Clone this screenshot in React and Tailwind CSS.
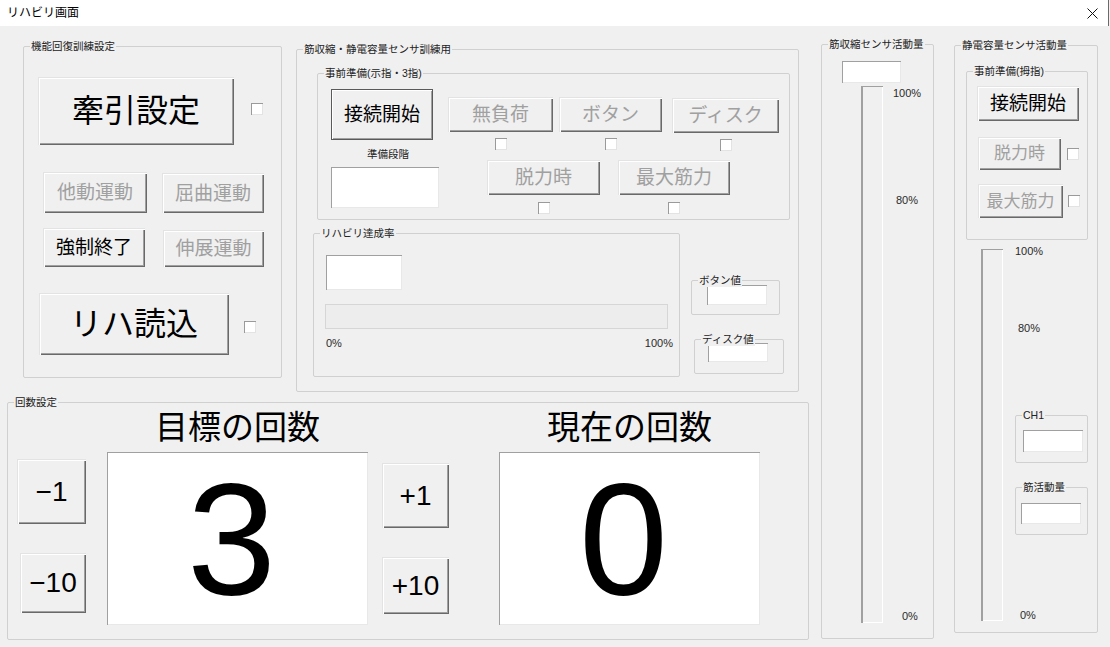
import React from 'react';
import clsx from 'clsx';

const Btn = ({ className = '', disabled, primary, children }) => (
  <button
    type="button"
    className={clsx(
      'flex shrink-0 items-center justify-center whitespace-nowrap bg-[#f0f0f0] leading-none',
      primary
        ? 'border border-[#5a5a5a] shadow-[inset_1px_1px_0_#ffffff,inset_-1px_-1px_0_#a0a0a0]'
        : 'shadow-[inset_1px_1px_0_#e3e3e3,inset_2px_2px_0_#ffffff,inset_-1px_-1px_0_#696969,inset_-2px_-2px_0_#a0a0a0]',
      disabled ? 'text-[#a0a0a0]' : 'text-black',
      className
    )}
  >
    {children}
  </button>
);

const Check = ({ className = '' }) => (
  <div className={clsx('h-[12px] w-[12px] shrink-0 bg-white shadow-[inset_1px_1px_0_#9a9a9a,inset_-1px_-1px_0_#e3e3e3]', className)} />
);

const TextBox = ({ className = '', children }) => (
  <div className={clsx('shrink-0 bg-white shadow-[inset_1px_1px_0_#a0a0a0,inset_-1px_-1px_0_#e8e8e8]', className)}>
    {children}
  </div>
);

const Group = ({ label, className = '', children }) => (
  <div className={clsx('relative shrink-0 rounded-[2px] border border-[#d0d0d0]', className)}>
    <span className="absolute -top-[8px] left-[6px] z-10 whitespace-nowrap bg-[#f0f0f0] px-[1px] text-[10.5px] leading-[14px] text-[#222]">
      {label}
    </span>
    {children}
  </div>
);

const VBar = ({ className = '' }) => (
  <div className={clsx('w-[22px] shrink-0 shadow-[inset_2px_0_0_#a0a0a0,inset_0_1px_0_#a0a0a0,inset_-1px_-1px_0_#ffffff]', className)} />
);

const Pct = ({ className = '', children }) => (
  <span className={clsx('text-[11px] leading-[14px] text-[#2a2a2a]', className)}>{children}</span>
);

// checkbox under a button, centered
const Stack = ({ w, h, label, className = '', checkGap = 'mt-[6px]' }) => (
  <div className={clsx('flex shrink-0 flex-col items-center', className)}>
    <Btn disabled className={clsx(w, h, 'text-[19px]')}>{label}</Btn>
    <Check className={checkGap} />
  </div>
);

export default function App() {
  return (
    <div className="h-[647px] w-[1110px] overflow-hidden bg-[#f0f0f0] font-['Liberation_Sans','Noto_Sans_CJK_JP',sans-serif] text-[#111]">
      {/* Title bar */}
      <div className="flex h-[26px] w-[1109px] items-center justify-between border-r border-[#6a6a6a] bg-white pl-[7px] pr-[10px]">
        <span className="text-[12px] text-black">リハビリ画面</span>
        <svg width="11" height="11" viewBox="0 0 11 11" className="mt-[1px]">
          <path d="M0.5 0.5 L10.5 10.5 M10.5 0.5 L0.5 10.5" stroke="#111" strokeWidth="1" />
        </svg>
      </div>

      <div className="flex items-start">
        {/* Left region */}
        <div className="ml-[7px] w-[802px] shrink-0">
          <div className="flex items-start">
            {/* 機能回復訓練設定 */}
            <Group label="機能回復訓練設定" className="ml-[16px] mt-[20px] flex h-[332px] w-[259px] flex-col">
              <div className="ml-[14px] mt-[30px] flex items-center">
                <Btn className="h-[68px] w-[196px] text-[32px]">牽引設定</Btn>
                <Check className="ml-[17px] -mt-[4px]" />
              </div>
              <div className="ml-[19px] mt-[27px] flex items-start gap-[15px]">
                <Btn disabled className="h-[41px] w-[104px] text-[19px]">他動運動</Btn>
                <Btn disabled className="mt-[1px] h-[40px] w-[102px] text-[19px]">屈曲運動</Btn>
              </div>
              <div className="ml-[19px] mt-[15px] flex items-start gap-[18px]">
                <Btn className="h-[39px] w-[102px] text-[19px]">強制終了</Btn>
                <Btn disabled className="mt-[2px] h-[37px] w-[101px] text-[19px]">伸展運動</Btn>
              </div>
              <div className="ml-[15px] mt-[26px] flex items-center">
                <Btn className="h-[62px] w-[190px] text-[32px]">リハ読込</Btn>
                <Check className="ml-[15px] mt-[6px]" />
              </div>
            </Group>

            {/* 筋収縮・静電容量センサ訓練用 */}
            <Group label="筋収縮・静電容量センサ訓練用" className="ml-[14px] mt-[23px] flex h-[343px] w-[503px] flex-col">
              <Group label="事前準備(示指・3指)" className="ml-[20px] mt-[23px] flex h-[147px] w-[473px] items-start">
                <div className="ml-[13px] mt-[15px] flex w-[108px] flex-col items-start">
                  <Btn primary className="h-[51px] w-[102px] text-[19px]">接続開始</Btn>
                  <span className="ml-[36px] mt-[7px] text-[10.5px] leading-[14px] text-[#222]">準備段階</span>
                  <TextBox className="mt-[6px] h-[41px] w-[108px]" />
                </div>
                <div className="ml-[9px] mt-[23px] flex flex-col">
                  <div className="flex items-start">
                    <Stack w="w-[105px]" h="h-[35px]" label="無負荷" />
                    <Stack w="w-[103px]" h="h-[35px]" label="ボタン" className="ml-[6px]" />
                    <Stack w="w-[107px]" h="h-[35px]" label="ディスク" className="ml-[10px] mt-[1px]" />
                  </div>
                  <div className="ml-[39px] mt-[9px] flex items-start">
                    <Stack w="w-[113px]" h="h-[35px]" label="脱力時" checkGap="mt-[7px]" />
                    <Stack w="w-[112px]" h="h-[35px]" label="最大筋力" className="ml-[18px]" checkGap="mt-[7px]" />
                  </div>
                </div>
              </Group>

              <div className="flex items-start">
                <Group label="リハビリ達成率" className="ml-[16px] mt-[13px] flex h-[144px] w-[367px] flex-col">
                  <TextBox className="ml-[12px] mt-[21px] h-[35px] w-[76px]" />
                  <div className="ml-[11px] mt-[14px] h-[25px] w-[343px] border border-[#d6d6d6] bg-[#ededed]" />
                  <div className="ml-[12px] mt-[7px] flex w-[347px] justify-between">
                    <Pct>0%</Pct>
                    <Pct>100%</Pct>
                  </div>
                </Group>
                <div className="ml-[11px] flex flex-col">
                  <Group label="ボタン値" className="mt-[60px] h-[35px] w-[89px]">
                    <TextBox className="ml-[15px] mt-[4px] h-[20px] w-[60px]" />
                  </Group>
                  <Group label="ディスク値" className="ml-[3px] mt-[24px] h-[35px] w-[90px]">
                    <TextBox className="ml-[13px] mt-[3px] h-[19px] w-[60px]" />
                  </Group>
                </div>
              </div>
            </Group>
          </div>

          {/* 回数設定 */}
          <Group label="回数設定" className="mt-[10px] flex h-[238px] w-[802px] items-start">
            <div className="ml-[9px] mt-[56px] flex w-[69px] flex-col">
              <Btn className="h-[65px] w-[69px] text-[28px]">−1</Btn>
              <Btn className="ml-[3px] mt-[29px] h-[60px] w-[66px] text-[28px]">−10</Btn>
            </div>
            <div className="ml-[21px] flex w-[261px] flex-col">
              <div className="mt-[7px] h-[36px] whitespace-nowrap text-center text-[33px] leading-[36px] text-black">目標の回数</div>
              <TextBox className="mt-[6px] flex h-[173px] w-[261px] items-center justify-center pr-[12px]">
                <span className="text-[160px] leading-none text-black">3</span>
              </TextBox>
            </div>
            <div className="ml-[14px] mt-[60px] flex w-[67px] flex-col">
              <Btn className="h-[65px] w-[67px] text-[28px]">+1</Btn>
              <Btn className="mt-[29px] h-[57px] w-[67px] text-[28px]">+10</Btn>
            </div>
            <div className="ml-[50px] flex w-[261px] flex-col">
              <div className="mt-[7px] h-[36px] whitespace-nowrap text-center text-[33px] leading-[36px] text-black">現在の回数</div>
              <TextBox className="mt-[6px] flex h-[173px] w-[261px] items-center justify-center pr-[12px]">
                <span className="text-[160px] leading-none text-black">0</span>
              </TextBox>
            </div>
          </Group>
        </div>

        {/* 筋収縮センサ活動量 */}
        <Group label="筋収縮センサ活動量" className="ml-[12px] mt-[18px] flex h-[595px] w-[113px] flex-col">
          <TextBox className="ml-[20px] mt-[16px] h-[22px] w-[59px]" />
          <div className="mt-[3px] flex items-start">
            <VBar className="ml-[39px] h-[537px]" />
            <div className="ml-[10px] flex flex-col items-start">
              <Pct>100%</Pct>
              <Pct className="ml-[3px] mt-[93px]">80%</Pct>
              <Pct className="ml-[9px] mt-[402px]">0%</Pct>
            </div>
          </div>
        </Group>

        {/* 静電容量センサ活動量 */}
        <Group label="静電容量センサ活動量" className="ml-[20px] mt-[19px] flex h-[588px] w-[144px] flex-col">
          <Group label="事前準備(拇指)" className="ml-[11px] mt-[25px] flex h-[169px] w-[122px] flex-col">
            <Btn className="ml-[10px] mt-[14px] h-[35px] w-[102px] text-[19px]">接続開始</Btn>
            <div className="ml-[11px] mt-[16px] flex items-center">
              <Btn disabled className="h-[33px] w-[83px] text-[17px]">脱力時</Btn>
              <Check className="ml-[6px]" />
            </div>
            <div className="ml-[11px] mt-[14px] flex items-center">
              <Btn disabled className="h-[34px] w-[85px] text-[17px]">最大筋力</Btn>
              <Check className="ml-[5px]" />
            </div>
          </Group>
          <div className="mt-[9px] flex items-start">
            <VBar className="ml-[26px] h-[372px]" />
            <div className="-mt-[5px] ml-[12px] flex flex-col items-start">
              <Pct>100%</Pct>
              <Pct className="ml-[3px] mt-[63px]">80%</Pct>
              <Group label="CH1" className="mt-[80px] h-[48px] w-[73px]">
                <TextBox className="ml-[7px] mt-[14px] h-[22px] w-[60px]" />
              </Group>
              <Group label="筋活動量" className="mt-[24px] h-[48px] w-[73px]">
                <TextBox className="ml-[5px] mt-[15px] h-[21px] w-[60px]" />
              </Group>
              <Pct className="ml-[5px] mt-[73px]">0%</Pct>
            </div>
          </div>
        </Group>
      </div>
    </div>
  );
}
